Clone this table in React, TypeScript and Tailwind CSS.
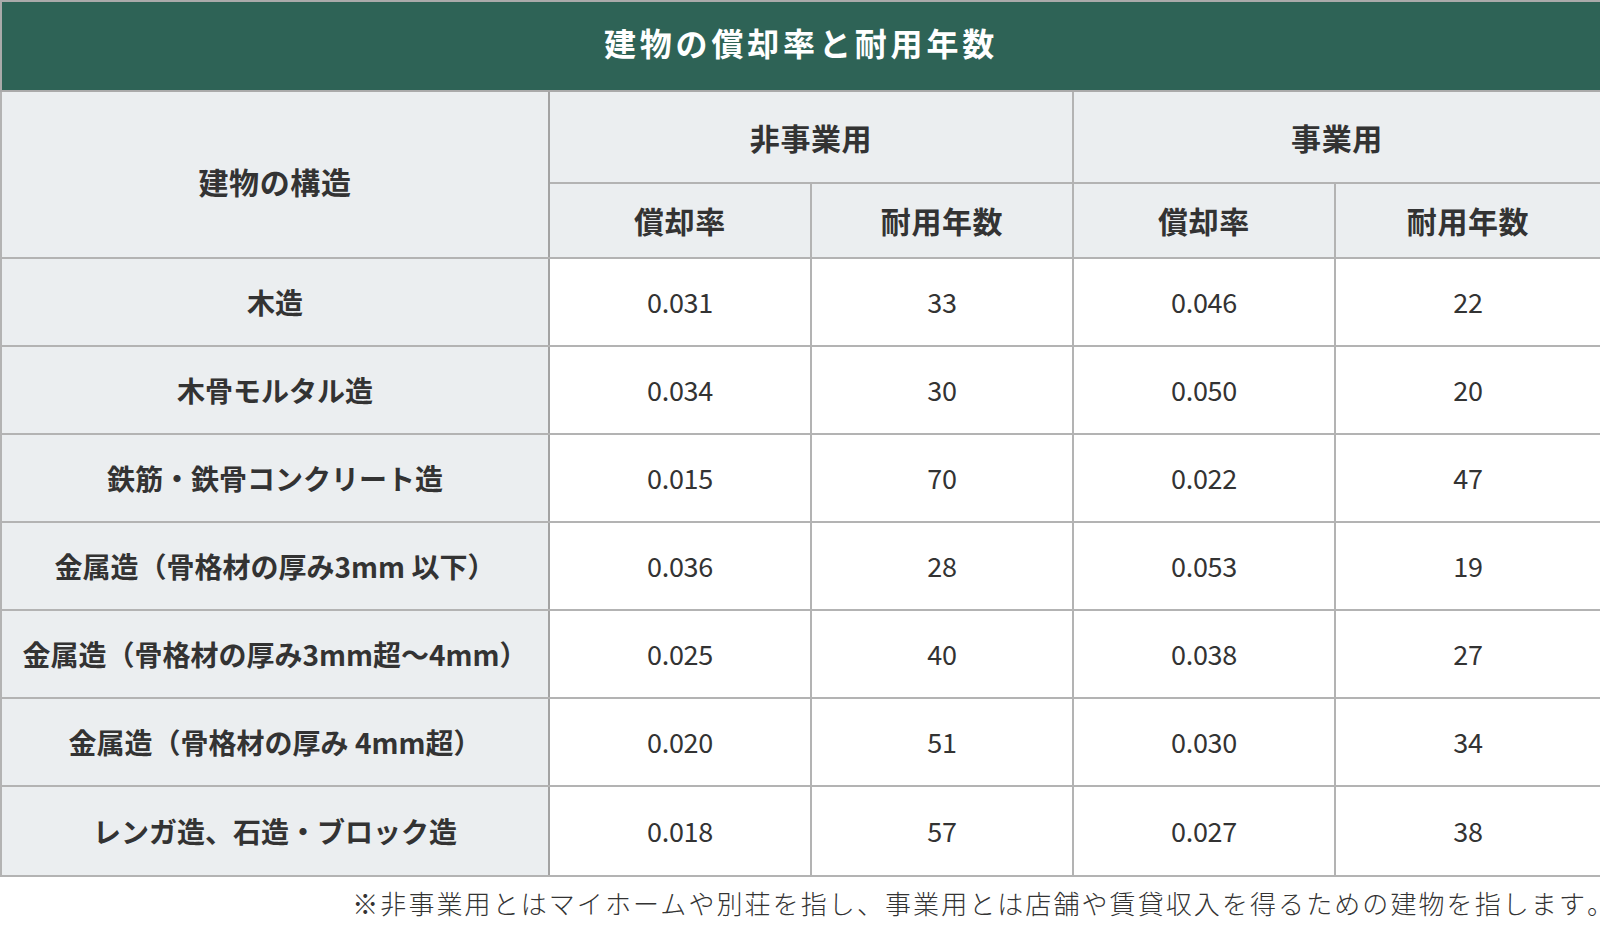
import React from "react";

const rows: [string, string, string, string, string][] = [
  ["木造", "0.031", "33", "0.046", "22"],
  ["木骨モルタル造", "0.034", "30", "0.050", "20"],
  ["鉄筋・鉄骨コンクリート造", "0.015", "70", "0.022", "47"],
  ["金属造（骨格材の厚み3mm 以下）", "0.036", "28", "0.053", "19"],
  ["金属造（骨格材の厚み3mm超～4mm）", "0.025", "40", "0.038", "27"],
  ["金属造（骨格材の厚み 4mm超）", "0.020", "51", "0.030", "34"],
  ["レンガ造、石造・ブロック造", "0.018", "57", "0.027", "38"],
];

export default function App() {
  return (
    <div
      className="w-[1600px] h-[934px] overflow-hidden bg-white text-[#333333]"
      style={{ fontFamily: '"Noto Sans CJK JP", "Noto Sans", sans-serif' }}
    >
      <table className="w-[1600px] table-fixed border-collapse border-2 border-[#aaaaaa]">
        <colgroup>
          <col className="w-[548px]" />
          <col className="w-[262px]" />
          <col className="w-[262px]" />
          <col className="w-[262px]" />
          <col className="w-[266px]" />
        </colgroup>
        <thead>
          <tr>
            <th
              colSpan={5}
              className="h-[90px] bg-[#2e6356] text-white text-[32px] font-bold tracking-[0.12em] text-center border-2 border-[#aaaaaa] pt-0 pb-[8px] px-0"
            >
              建物の償却率と耐用年数
            </th>
          </tr>
          <tr>
            <th
              rowSpan={2}
              className="bg-[#ebeef0] text-[30px] font-bold text-center border-2 border-[#b3b3b3] border-r-[#a3a3a3] pt-[14px] pb-0 px-0 tracking-[0.02em]"
            >
              建物の構造
            </th>
            <th
              colSpan={2}
              className="h-[92px] bg-[#ebeef0] text-[30px] font-bold text-center border-2 border-[#b3b3b3] p-0 tracking-[0.02em]"
            >
              非事業用
            </th>
            <th
              colSpan={2}
              className="h-[92px] bg-[#ebeef0] text-[30px] font-bold text-center border-2 border-[#b3b3b3] p-0 tracking-[0.02em]"
            >
              事業用
            </th>
          </tr>
          <tr>
            {["償却率", "耐用年数", "償却率", "耐用年数"].map((t, i) => (
              <th
                key={i}
                className="h-[75px] bg-[#ebeef0] text-[30px] font-bold text-center border-2 border-[#b3b3b3] p-0 tracking-[0.02em]"
              >
                {t}
              </th>
            ))}
          </tr>
        </thead>
        <tbody>
          {rows.map((r, i) => (
            <tr key={i}>
              <td
                className={`${i === rows.length - 1 ? "h-[90px]" : "h-[88px]"} bg-[#ebeef0] text-[28px] font-bold text-center border-2 border-[#b3b3b3] border-r-[#a3a3a3] p-0`}
              >
                {r[0]}
              </td>
              {r.slice(1).map((v, j) => (
                <td
                  key={j}
                  className="bg-white text-[27px] text-center border-2 border-[#b3b3b3] p-0 tracking-[-0.01em]"
                >
                  {v}
                </td>
              ))}
            </tr>
          ))}
        </tbody>
      </table>
      <p className="mt-[6px] text-right text-[26px] font-light leading-[40px] tracking-[0.08em] text-[#333333] whitespace-nowrap">
        ※非事業用とはマイホームや別荘を指し、事業用とは店舗や賃貸収入を得るための建物を指します
        <span className="tracking-normal [font-feature-settings:'halt']">。</span>
      </p>
    </div>
  );
}
